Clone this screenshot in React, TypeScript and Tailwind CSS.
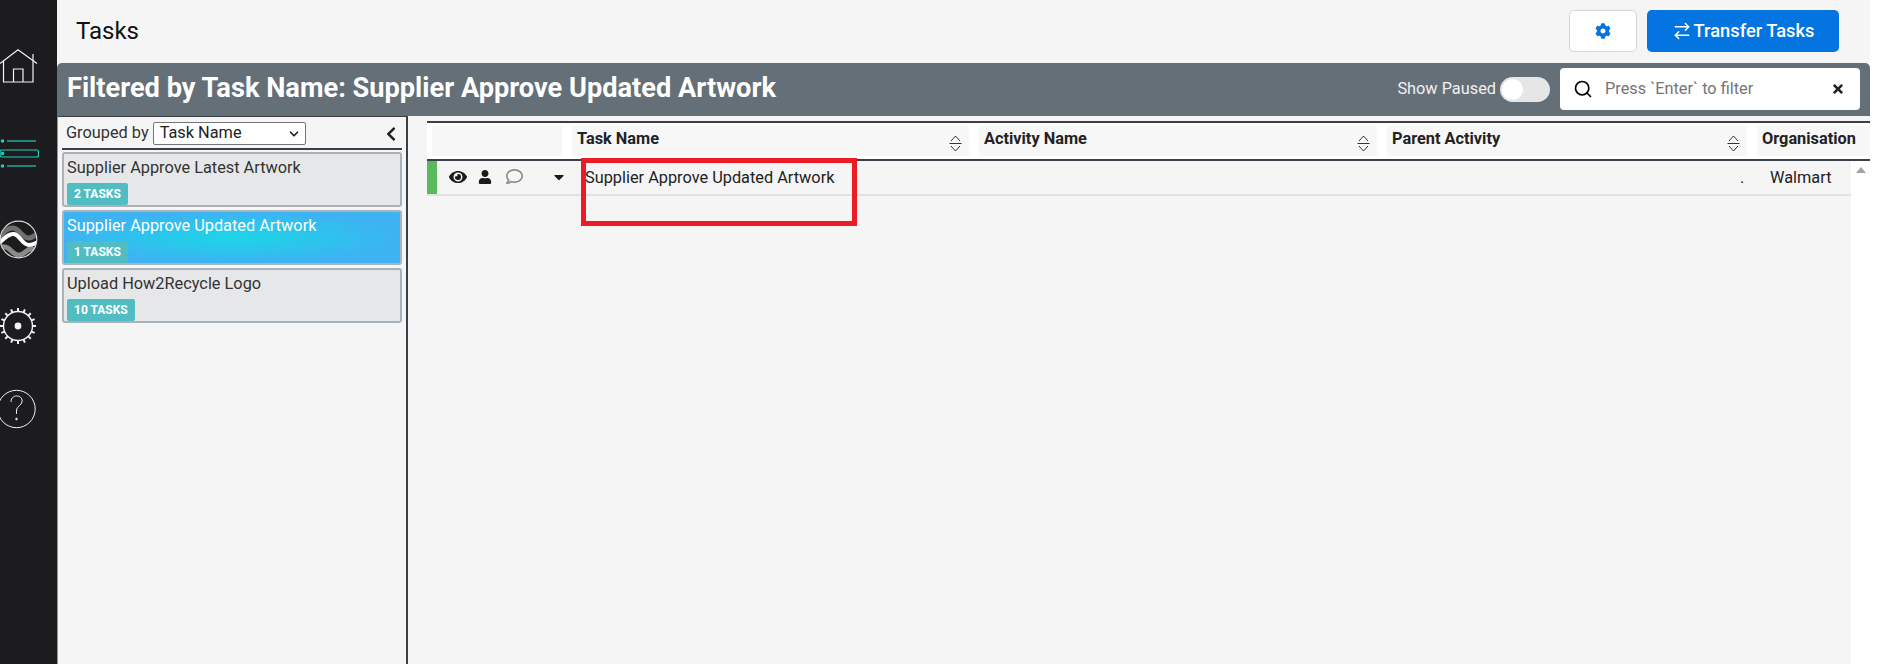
import { ChevronDown, Search, ArrowRightLeft } from 'lucide-react'
import { FaCog, FaEye, FaUser, FaRegComment, FaTimes, FaChevronLeft, FaCaretDown } from 'react-icons/fa'

const groups = [
  { name: 'Supplier Approve Latest Artwork', tasks: '2 TASKS', active: false },
  { name: 'Supplier Approve Updated Artwork', tasks: '1 TASKS', active: true },
  { name: 'Upload How2Recycle Logo', tasks: '10 TASKS', active: false },
]

const columns = [
  { name: 'Task Name', cls: 'w-[397px]', sort: true },
  { name: 'Activity Name', cls: 'w-[398px]', sort: true },
  { name: 'Parent Activity', cls: 'w-[360px]', sort: true },
  { name: 'Organisation', cls: 'w-[113px]', sort: false },
]

function HomeIcon() {
  return (
    <svg width="38" height="36" viewBox="0 0 38 36" fill="none" stroke="#f2f2f2" strokeWidth="1.2">
      <path d="M0 14.5 L18 0.8 L37 14.5" />
      <path d="M3.5 12 V33 H33 V5" />
      <path d="M13.5 33 V20 H23 V33" />
    </svg>
  )
}

function ListIcon() {
  return (
    <svg width="40" height="32" viewBox="0 0 40 32" fill="none">
      <g stroke="#1ccfc0" strokeWidth="1.2">
        <path d="M7 3 H36" />
        <rect x="0" y="12" width="38.5" height="7" rx="2" />
        <path d="M7 28 H36" />
      </g>
      <g fill="#1ccfc0">
        <circle cx="2.5" cy="3" r="1.8" />
        <circle cx="2.5" cy="15.5" r="1.8" />
        <circle cx="2.5" cy="28" r="1.8" />
      </g>
    </svg>
  )
}

function WaveIcon() {
  return (
    <svg width="38" height="40" viewBox="0 0 38 40" fill="none">
      <defs>
        <clipPath id="wave-clip">
          <circle cx="18.5" cy="19.5" r="18" />
        </clipPath>
      </defs>
      <g clipPath="url(#wave-clip)">
        <path d="M-2 20 C4 10 10 6 16 9 C21 12 24 19 30 18 C34 17 36 14 40 12" stroke="#6f6f6f" strokeWidth="5" />
        <path d="M-2 27 C2 27 5 26 8 28 C12 31 15 36 20 35 C25 34 27 29 31 29 C34 29 37 31 40 30" stroke="#8a8a8a" strokeWidth="5" />
        <path d="M-2 24 C3 20 8 13 14 14 C20 15 22 25 29 25 C33 25 36 23 40 21" stroke="#ffffff" strokeWidth="4" />
      </g>
      <circle cx="18.5" cy="19.5" r="18.3" stroke="#d8d8d8" strokeWidth="1.2" />
    </svg>
  )
}

function GearIcon() {
  const teeth = Array.from({ length: 16 }, (_, i) => i * 22.5)
  return (
    <svg width="38" height="38" viewBox="0 0 38 38" fill="none" stroke="#f2f2f2">
      <circle cx="18" cy="19" r="14.5" strokeWidth="1.4" />
      <circle cx="18" cy="19" r="3.4" fill="#f2f2f2" stroke="none" />
      {teeth.map(a => (
        <path key={a} d="M18 4.5 V1" strokeWidth="2" transform={`rotate(${a} 18 19)`} />
      ))}
    </svg>
  )
}

function HelpIcon() {
  return (
    <svg width="38" height="40" viewBox="0 0 38 40" fill="none" stroke="#f2f2f2" strokeWidth="1">
      <circle cx="16.5" cy="20" r="18.7" />
      <path d="M11 13 C11 8 15 6.5 17.5 7 C21 7.5 22.5 10 22 13 C21.5 16 17 17.5 16.5 21 V25" />
      <circle cx="16.5" cy="30" r="0.8" fill="#f2f2f2" />
    </svg>
  )
}

function SortIcon() {
  return (
    <svg width="13" height="17" viewBox="0 0 13 17" fill="none" stroke="#333" strokeWidth="1">
      <path d="M2 6 L6.5 1 L11 6" />
      <path d="M0.5 8.5 H12.5" />
      <path d="M2 11 L6.5 16 L11 11" />
    </svg>
  )
}

export default function App() {
  return (
    <div className="relative flex h-[664px] w-[1879px] overflow-hidden bg-white font-['Roboto',sans-serif] text-[#212529]">
      <aside className="flex w-[57px] shrink-0 flex-col bg-[#1c1c1e]">
        <div className="mt-[49px] h-[36px]"><HomeIcon /></div>
        <div className="mt-[53px] h-[32px]"><ListIcon /></div>
        <div className="mt-[50px] h-[40px]"><WaveIcon /></div>
        <div className="mt-[47px] h-[38px]"><GearIcon /></div>
        <div className="mt-[44px] h-[40px]"><HelpIcon /></div>
      </aside>

      <main className="flex w-[1813px] shrink-0 flex-col bg-[#f5f5f5]">
        <header className="flex h-[63px] items-center justify-between pb-[1px] pl-[19px] pr-[31px]">
          <h1 className="text-[24px] leading-none text-[#111]">Tasks</h1>
          <div className="flex gap-[10px]">
            <button className="flex h-[42px] w-[68px] items-center justify-center rounded-[5px] border border-[#d5d5d5] bg-white text-[#0474e0]">
              <FaCog size={16} />
            </button>
            <button className="flex h-[42px] w-[192px] items-center justify-center gap-[2px] rounded-[5px] bg-[#0474e0] text-[18.3px] font-medium text-white">
              <ArrowRightLeft size={20} strokeWidth={1.8} />
              Transfer Tasks
            </button>
          </div>
        </header>

        <div className="flex h-[53px] items-center justify-between rounded-t-[5px] bg-[#656f78] pb-[1px] pl-[10px] pr-[10px]">
          <h2 className="text-[27.2px] font-bold leading-none text-white">Filtered by Task Name: Supplier Approve Updated Artwork</h2>
          <div className="flex items-center">
            <span className="text-[16.32px] text-[#f0f0f0]">Show Paused</span>
            <span className="ml-[4px] flex h-[25px] w-[50px] items-center rounded-full bg-[#e6e6e6] pl-[2px]">
              <span className="h-[21px] w-[21px] rounded-full bg-white" />
            </span>
            <div className="ml-[10px] flex h-[42px] w-[300px] items-center rounded-[4px] bg-white pl-[13px] pr-[15px]">
              <Search size={20} strokeWidth={2} className="text-black" />
              <span className="ml-[12px] flex-1 pt-[1px] text-[16.32px] text-[#757575]">Press `Enter` to filter</span>
              <FaTimes size={14} className="text-[#222]" />
            </div>
          </div>
        </div>

        <div className="flex min-h-0 flex-1">
          <section className="w-[351px] shrink-0 border-l border-r-2 border-t border-l-[#8f979e] border-r-[#3a4047] border-t-[#3a4047] px-[4px]">
            <div className="flex h-[33px] items-center border-b-2 border-[#3a4047] pl-[4px] pr-[3px] pt-[2px]">
              <label className="text-[16.32px] text-[#333]">Grouped by</label>
              <div className="relative ml-[4px] flex h-[23px] w-[153px] items-center rounded-[2px] border border-[#767676] bg-white pl-[6px] text-[16.32px] text-[#222]">
                Task Name
                <ChevronDown size={14} strokeWidth={3} className="absolute right-[4px]" />
              </div>
              <FaChevronLeft size={16} className="ml-auto text-[#222]" />
            </div>
            <div className="mt-[2px] flex flex-col gap-[3px]">
              {groups.map(g => (
                <div
                  key={g.name}
                  className={g.active
                    ? 'h-[55px] rounded-[3px] border-2 border-[#a9b4bd] bg-[radial-gradient(ellipse_at_center,#1bd6e6_0%,#3db3f2_70%)] pl-[3px] pt-[3px] text-white'
                    : 'h-[55px] rounded-[3px] border-2 border-[#a9b1b9] bg-[#e6e7e9] pl-[3px] pt-[3px] text-[#333]'}
                >
                  <div className="text-[16.32px] leading-[22px]">{g.name}</div>
                  <span className="mt-[4px] inline-block h-[22px] rounded-[2px] bg-[#52bcc3] px-[7px] text-[12px] font-bold leading-[22px] text-white">
                    {g.tasks}
                  </span>
                </div>
              ))}
            </div>
          </section>

          <section className="ml-[19px] mt-[5px] min-w-0 flex-1">
            <div className="flex h-[40px] gap-[10px] border-b-2 border-t-2 border-b-[#3a4047] border-t-[#3a4047] bg-white py-[3px] pl-[5px]">
              <div className="w-[130px] bg-[#f7f7f7]" />
              {columns.map(c => (
                <div key={c.name} className={`${c.cls} flex items-start justify-between bg-[#f7f7f7] pl-[5px] pr-[7px] pt-[1px]`}>
                  <span className="text-[16.32px] font-bold leading-[24px] text-[#222]">{c.name}</span>
                  {c.sort && <span className="mt-[8px]"><SortIcon /></span>}
                </div>
              ))}
            </div>
            <div className="flex">
              <div className="flex h-[35px] w-[1424px] items-start border-b-2 border-[#e2e2e2]">
                <div className="h-full w-[10px] bg-[#5cb85c]" />
                <div className="flex h-full w-[148px] items-center pb-[2px] pl-[12px] text-[#1b1b1b]">
                  <FaEye size={18} />
                  <FaUser size={14} className="ml-[11px]" />
                  <FaRegComment size={17} className="ml-[14px] text-[#8a8a8a]" />
                  <FaCaretDown size={16} className="ml-[28px]" />
                </div>
                <div className="flex h-full flex-1 items-center pt-[1px] text-[16.32px] text-[#222]">
                  <span className="w-[1155px]">Supplier Approve Updated Artwork</span>
                  <span className="w-[30px]">.</span>
                  <span>Walmart</span>
                </div>
              </div>
              <div className="flex h-[503px] flex-1 justify-center bg-white pt-[6px]">
                <span className="h-0 w-0 border-x-[5px] border-b-[6px] border-x-transparent border-b-[#a3a3a3]" />
              </div>
            </div>
          </section>
        </div>
      </main>

      <div className="flex-1 bg-white" />

      {/* annotation drawn over the screenshot */}
      <div className="absolute left-[581px] top-[158px] h-[68px] w-[276px] border-[5px] border-[#ed1c24]" />
    </div>
  )
}
